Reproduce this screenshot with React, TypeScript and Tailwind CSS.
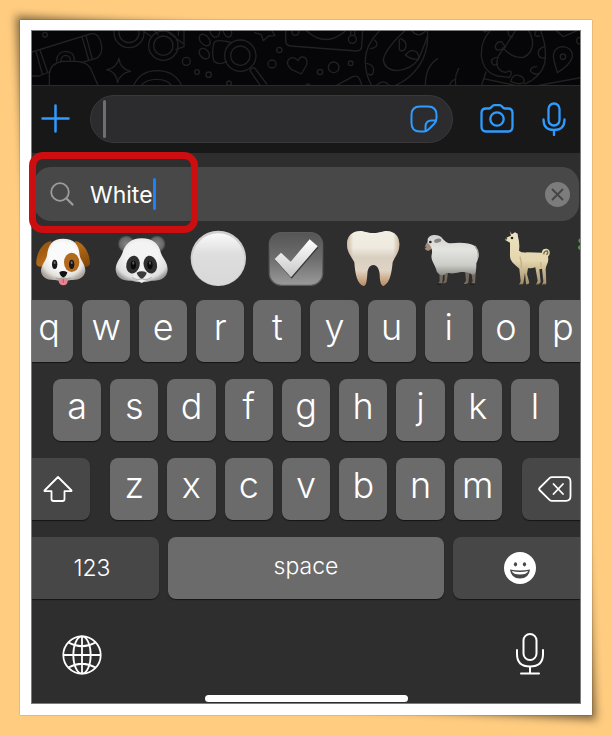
import { useState } from "react";
import type { ReactNode } from "react";

const Doodles = () => (
  <svg
    className="h-[54px] w-full"
    viewBox="0 0 1644 162"
    preserveAspectRatio="xMidYMid slice"
    fill="none"
    stroke="#222223"
    strokeWidth="4"
    strokeLinecap="round"
    strokeLinejoin="round"
    aria-hidden="true"
  >
    <g transform="translate(-96 -93)">
      <circle cx="135" cy="104" r="7" />
      <path d="M90 158L270 102Q294 96 303 128Q312 165 286 176L244 188M90 228H116L148 216" />
      <path d="M108 155L127 222M120 151L143 217M246 110L266 180M258 107L277 178" />
      <path d="M170 184Q170 154 198 154Q224 156 223 182M182 184Q184 166 198 166Q212 168 211 182" />
      <path d="M148 258V222Q150 190 188 184H230Q262 186 272 206L295 258" />
      <path d="M357 175Q359 206 392 214Q360 218 353 248Q350 216 320 209Q350 204 357 175Z" />
      <circle cx="387" cy="98" r="45" />
      <circle cx="387" cy="98" r="30" />
      <path d="M434 96L452 108M464 93L474 104M535 93V106M552 93V140L528 148M500 93L548 130" />
      <circle cx="490" cy="137" r="44" />
      <circle cx="490" cy="137" r="29" />
      <path d="M400 258Q420 212 472 212Q524 212 546 258M422 258Q438 238 470 238Q502 238 516 258" />
      <circle cx="559" cy="184" r="12" />
      <circle cx="591" cy="216" r="7" />
      <circle cx="626" cy="224" r="8" />
      <circle cx="687" cy="250" r="7" />
      <ellipse cx="614" cy="120" rx="13" ry="20" transform="rotate(-42 614 120)" />
      <ellipse cx="613" cy="161" rx="13" ry="18" transform="rotate(-42 613 161)" />
      <ellipse cx="644" cy="93" rx="14" ry="19" transform="rotate(-20 644 93)" />
      <ellipse cx="682" cy="93" rx="12" ry="19" transform="rotate(-20 682 93)" />
      <circle cx="721" cy="167" r="47" />
      <circle cx="721" cy="167" r="29" />
      <path d="M695 128Q650 116 642 128Q634 160 642 184Q658 198 680 184" />
      <path d="M750 212Q752 202 764 204L800 252M750 212L782 258" />
      <path d="M764 98L784 104L790 122L806 108L825 107L816 93" />
      <circle cx="838" cy="150" r="8" />
      <circle cx="816" cy="192" r="12" />
      <circle cx="886" cy="96" r="10" />
      <path d="M904 222L874 208Q856 192 866 178Q880 166 894 182Q900 168 914 172Q926 184 918 198Z" />
      <path d="M857 93V124Q858 136 872 138L1070 153Q1084 152 1085 140L1088 93M920 93Q978 144 1036 93" />
    </g>
    <g transform="translate(810 -93)">
      <path d="M146 93V106M158 93V106" />
      <circle cx="151" cy="118" r="12" />
      <circle cx="95" cy="202" r="16" />
      <circle cx="54" cy="216" r="8" />
      <circle cx="146" cy="190" r="7" />
      <path d="M10 258Q18 246 26 258M100 258L152 230Q168 224 174 240L180 258" />
      <path d="M232 93Q186 140 190 190Q192 230 210 258M376 93Q382 150 352 196Q322 240 276 258" />
      <path d="M308 93Q252 144 244 178Q246 208 284 212Q330 208 350 176Q370 130 376 110" />
      <path d="M218 120Q236 140 206 146M194 190Q222 196 212 222Q206 228 200 222M226 254Q244 236 262 256M296 116Q318 126 310 146Q298 158 292 148V118M310 166Q326 144 344 156Q354 168 348 180M310 164Q324 178 346 178M330 93Q350 116 370 93" />
      <path d="M407 176Q370 198 370 258M470 205Q456 230 462 258M442 258Q448 240 460 238" />
      <path d="M564 93Q536 122 538 168Q544 216 586 228L622 232Q634 216 622 212Q606 224 590 206Q574 180 604 148L640 93" />
      <path d="M604 146Q580 158 580 138Q586 122 600 126L610 142M584 172Q564 176 570 190Q576 200 586 192M602 142Q630 176 664 172Q692 160 692 128Q690 106 680 93M618 93Q618 112 632 110" />
      <path d="M716 93Q736 142 728 190Q716 232 668 252M712 108Q692 112 702 93M726 140Q704 148 710 166Q714 176 728 174M712 220Q696 226 686 214Q682 202 704 200M626 244Q632 222 650 226Q670 232 666 248Q648 256 626 244" />
      <path d="M538 258L552 216M544 236L640 256M700 258L840 232" />
      <path d="M766 218L755 178Q750 142 784 140Q816 146 810 174Q802 196 766 218Z" />
      <circle cx="783" cy="170" r="8" />
      <circle cx="834" cy="122" r="10" />
      <path d="M764 93L784 110L824 93M544 93L550 96L556 93" />
    </g>
  </svg>
);

const Dog = () => (
  <>
    <defs>
      <radialGradient id="dogHead" cx=".5" cy=".4" r=".62">
        <stop offset=".5" stopColor="#fafafa" />
        <stop offset=".8" stopColor="#e6e3df" />
        <stop offset="1" stopColor="#aaa49c" />
      </radialGradient>
      <linearGradient id="dogEar" x1="0" y1="0" x2="1" y2="1">
        <stop offset="0" stopColor="#8e500e" />
        <stop offset=".5" stopColor="#b56a17" />
        <stop offset="1" stopColor="#7d430a" />
      </linearGradient>
    </defs>
    <path d="M50 34C26 32 2 70 4 102C8 114 26 112 34 98ZM119 34C142 32 166 70 165 102C160 114 144 112 134 98Z" fill="url(#dogEar)" />
    <path d="M84 26C116 26 132 42 134 76C136 90 152 104 151 124C148 142 130 152 108 150Q84 156 60 150C38 152 20 142 18 124C18 104 34 92 36 76C40 42 54 26 84 26Z" fill="url(#dogHead)" />
    <ellipse cx="110" cy="97" rx="23" ry="29" fill="#b16a1c" />
    <ellipse cx="59" cy="103" rx="8" ry="14" fill="#18181a" />
    <ellipse cx="110" cy="103" rx="8" ry="14" fill="#18181a" />
    <ellipse cx="59" cy="98" rx="3" ry="4" fill="#6f6f70" />
    <ellipse cx="110" cy="98" rx="3" ry="4" fill="#6f6f70" />
    <path d="M71 145H98V154Q97 166 85 166Q73 166 71 154Z" fill="#e8838f" />
    <path d="M85 147V159" stroke="#c95569" strokeWidth="3" />
    <path d="M62 144Q76 150 84 142Q94 150 108 144" fill="none" stroke="#a9a59f" strokeWidth="4" />
    <path d="M73 127Q84 119 97 127Q94 140 85 142Q76 140 73 127Z" fill="#111" />
  </>
);

const Panda = () => (
  <>
    <defs>
      <radialGradient id="pandaHead" cx=".5" cy=".4" r=".62">
        <stop offset=".5" stopColor="#f3f3f3" />
        <stop offset=".85" stopColor="#dedede" />
        <stop offset="1" stopColor="#9b9b9b" />
      </radialGradient>
      <radialGradient id="pandaEar">
        <stop offset="0" stopColor="#858585" />
        <stop offset=".75" stopColor="#696969" />
        <stop offset="1" stopColor="#3b4141" />
      </radialGradient>
    </defs>
    <circle cx="40" cy="42" r="25" fill="url(#pandaEar)" />
    <circle cx="132" cy="42" r="25" fill="url(#pandaEar)" />
    <path d="M86 25C120 25 138 42 144 70C150 86 164 96 164 120C162 144 142 154 116 152Q86 162 56 152C30 154 10 144 8 120C8 96 22 86 28 70C36 42 54 25 86 25Z" fill="url(#pandaHead)" />
    <ellipse cx="60" cy="104" rx="20" ry="27" fill="#2f2f2f" transform="rotate(12 60 104)" />
    <ellipse cx="112" cy="104" rx="20" ry="27" fill="#2f2f2f" transform="rotate(-12 112 104)" />
    <ellipse cx="61" cy="105" rx="8" ry="13" fill="#0a0a0a" />
    <ellipse cx="111" cy="105" rx="8" ry="13" fill="#0a0a0a" />
    <ellipse cx="61" cy="99" rx="3" ry="5" fill="#5c5c5c" />
    <ellipse cx="111" cy="99" rx="3" ry="5" fill="#5c5c5c" />
    <path d="M57 143Q68 124 86 124Q104 124 116 143Q104 146 86 159Q68 146 57 143Z" fill="#ededed" />
    <path d="M57 142Q72 154 86 145Q100 154 116 142" fill="none" stroke="#b8b8b8" strokeWidth="4" />
    <path d="M71 128Q86 120 101 128Q98 140 86 146Q74 140 71 128Z" fill="#3c3a3a" />
  </>
);

const WhiteCircle = () => (
  <>
    <defs>
      <linearGradient id="disc" x1="0" y1="0" x2="0" y2="1">
        <stop offset="0" stopColor="#fafafa" />
        <stop offset=".4" stopColor="#dedede" />
        <stop offset="1" stopColor="#d8d8d8" />
      </linearGradient>
    </defs>
    <circle cx="85" cy="85" r="83" fill="#cfcfcf" />
    <circle cx="85" cy="88" r="78" fill="url(#disc)" />
  </>
);

const CheckBox = () => (
  <>
    <defs>
      <linearGradient id="box" x1="0" y1="0" x2="0" y2="1">
        <stop offset="0" stopColor="#555" />
        <stop offset=".5" stopColor="#6e6e6e" />
        <stop offset="1" stopColor="#9a9a9a" />
      </linearGradient>
      <linearGradient id="tick" x1="0" y1="0" x2="0" y2="1">
        <stop offset="0" stopColor="#fff" />
        <stop offset="1" stopColor="#c6c6c6" />
      </linearGradient>
    </defs>
    <rect x="4" y="8" width="160" height="158" rx="36" fill="url(#box)" stroke="#5c5c5c" strokeWidth="4" />
    <path d="M22 91L41 72L70 99L127 32L151 53L71 146Z" fill="#3d3d3d" />
    <path d="M20 87L39 68L68 95L125 28L149 49L69 142Z" fill="url(#tick)" />
  </>
);

const Tooth = () => (
  <>
    <defs>
      <linearGradient id="tooth" x1="0" y1="0" x2="0" y2="1">
        <stop offset="0" stopColor="#f3efe3" />
        <stop offset=".3" stopColor="#eeeadf" />
        <stop offset=".48" stopColor="#d9cfc1" />
        <stop offset=".72" stopColor="#e0d4c4" />
        <stop offset="1" stopColor="#b98a61" />
      </linearGradient>
      <linearGradient id="toothSides">
        <stop offset="0" stopColor="#a98564" stopOpacity=".5" />
        <stop offset=".12" stopColor="#a98564" stopOpacity="0" />
        <stop offset=".88" stopColor="#a98564" stopOpacity="0" />
        <stop offset="1" stopColor="#a98564" stopOpacity=".5" />
      </linearGradient>
    </defs>
    {["url(#tooth)", "url(#toothSides)"].map((fill) => (
      <path
        key={fill}
        d="M45 3C58 3 66 9 85 9C104 9 112 3 126 3C150 4 163 20 163 43C163 70 149 80 143 97C140 126 136 158 116 168C106 168 104 146 104 132C102 116 96 105 85 105C74 105 68 116 67 132C66 146 65 168 56 168C36 164 30 128 28 97C20 80 6 68 6 43C6 20 20 3 45 3Z"
        fill={fill}
      />
    ))}
  </>
);

const Sheep = () => (
  <>
    <defs>
      <linearGradient id="wool" x1="0" y1="0" x2="0" y2="1">
        <stop offset="0" stopColor="#cfd0ce" />
        <stop offset=".35" stopColor="#e4e4e1" />
        <stop offset=".75" stopColor="#cccdc8" />
        <stop offset="1" stopColor="#8b8c86" />
      </linearGradient>
    </defs>
    <path d="M49 122H61L58 160L52 163H44L50 154ZM64 122H76L71 156L65 160H60L65 150ZM126 122H140L136 158L130 162H122L129 152ZM144 122H159L156 160L150 164H142L149 154Z" fill="#75685e" />
    <path d="M43 160H55V165H43ZM141 160H154V165H141Z" fill="#22201f" />
    <path d="M16 32Q8 40 5 54Q8 64 17 62L30 54V30Z" fill="#a08c7b" />
    <path d="M14 28C18 12 50 10 60 28C68 34 70 40 84 40C110 36 140 38 156 48C170 64 168 84 160 100C160 124 158 136 148 134C136 128 126 124 110 127C92 132 78 130 70 129C60 140 46 136 41 124C38 106 22 92 26 74C30 58 24 46 14 38Z" fill="url(#wool)" />
    <ellipse cx="44" cy="32" rx="11" ry="6" fill="#8a857b" transform="rotate(-15 44 32)" />
    <circle cx="22" cy="36" r="4" fill="#25201c" />
    <path d="M5 54L10 51" stroke="#4a3a32" strokeWidth="3" />
    <path d="M156 48Q170 66 164 84" fill="none" stroke="#a8aaa5" strokeWidth="4" />
  </>
);

const Llama = () => (
  <>
    <defs>
      <linearGradient id="llama" x1="0" y1="0" x2="0" y2="1">
        <stop offset="0" stopColor="#ece2c3" />
        <stop offset=".55" stopColor="#e4d6ad" />
        <stop offset="1" stopColor="#9f8d67" />
      </linearGradient>
    </defs>
    <path d="M29 3L37 12L45 7L53 11L54 20Q60 40 57 62Q66 70 82 67L126 68C124 56 142 52 148 62Q152 72 144 80C148 98 138 104 137 118L139 160L135 165H126L130 154L126 116L118 118L122 156L116 164H108L113 152L106 112Q92 116 84 114L81 132L88 158L84 163H78L75 128L70 160L65 165H57L62 154L58 116C42 102 28 94 30 72V38L17 31Q14 26 22 22L33 17Z" fill="url(#llama)" />
    <path d="M131 73Q132 62 142 63Q146 70 139 74" fill="none" stroke="#75694e" strokeWidth="4" />
    <path d="M60 80Q66 100 64 114M122 96L124 112" fill="none" stroke="#c3b283" strokeWidth="4" />
    <circle cx="36" cy="24" r="4" fill="#2a241b" />
    <path d="M17 25L21 28M31 3L36 11" stroke="#3d3428" strokeWidth="4" />
    <path d="M57 161H66V165H57ZM109 161H117V165H109ZM127 161H137V165H127Z" fill="#554b3b" />
  </>
);

const Herb = () => (
  <path d="M24 20Q2 22 1 32Q2 40 14 42Q-2 46 0 54Q4 64 24 60Q60 80 90 50Q60 20 24 20Z" fill="#4f9a3a" />
);

const emojis: { label: string; art: ReactNode }[] = [
  { label: "Dog face", art: <Dog /> },
  { label: "Panda", art: <Panda /> },
  { label: "White circle", art: <WhiteCircle /> },
  { label: "Check mark", art: <CheckBox /> },
  { label: "Tooth", art: <Tooth /> },
  { label: "Sheep", art: <Sheep /> },
  { label: "Llama", art: <Llama /> },
  { label: "Herb", art: <Herb /> },
];

const Key = ({ letter }: { letter: string }) => (
  <button className="flex h-[62px] min-w-0 flex-1 items-center justify-center rounded-lg bg-[#6b6b6b] pb-2 text-4xl font-light shadow-[0_1px_1px_#151515]">
    {letter}
  </button>
);

const darkKey =
  "flex h-[62px] shrink-0 items-center justify-center rounded-lg bg-[#474747] shadow-[0_1px_1px_#151515]";

const Toolbar = () => (
  <div className="flex h-[68px] items-center border-t border-[#2a2a2b] bg-[#181818] pr-3.5 pb-0.5 pl-[9px] text-[#2f9bff]">
    <button aria-label="Attach">
      <svg className="size-[29px]" viewBox="0 0 29 29" stroke="currentColor" strokeWidth="2.5" strokeLinecap="round">
        <path d="M14.5 1.5V27.5M1.5 14.5H27.5" />
      </svg>
    </button>

    <div className="ml-5 flex h-12 min-w-0 flex-1 items-center rounded-full border border-[#39393b] bg-[#2c2c2e] pr-3.5 pl-3">
      <span className="h-[38px] w-[3px] rounded-full bg-[#6f6f70]" />
      <input aria-label="Message" className="min-w-0 flex-1 bg-transparent px-2 text-2xl text-white outline-none" />
      <button aria-label="Stickers">
        <svg className="size-7" viewBox="0 0 28 28" fill="none" stroke="currentColor" strokeWidth="2" strokeLinejoin="round">
          <path d="M14 26.5H10Q1.5 26.5 1.5 18V10Q1.5 1.5 10 1.5H18Q26.5 1.5 26.5 10V13Q26.5 16.5 24 19L19 24Q16.5 26.5 14 26.5M15.5 26V22Q15.5 15.5 21.5 15.5H26" />
        </svg>
      </button>
    </div>

    <button aria-label="Camera" className="ml-[27px]">
      <svg className="h-[29px] w-[34px]" viewBox="0 0 34 29" fill="none" stroke="currentColor" strokeWidth="2.3" strokeLinejoin="round">
        <path d="M6 4.5H9Q10.5 4.5 11.5 3L12 2.5Q13 1.2 14.5 1.2H19.5Q21 1.2 22 2.5L22.5 3Q23.5 4.5 25 4.5H28Q32.5 4.5 32.5 9V22.5Q32.5 27.5 28 27.5H6Q1.5 27.5 1.5 22.5V9Q1.5 4.5 6 4.5Z" />
        <circle cx="17" cy="15" r="6.7" />
      </svg>
    </button>

    <button aria-label="Voice message" className="ml-7">
      <svg className="h-[34px] w-6" viewBox="0 0 24 34" fill="none" stroke="currentColor" strokeWidth="2.3" strokeLinecap="round">
        <rect x="6.5" y="1.5" width="11" height="22" rx="5.5" />
        <path d="M1.5 17.5Q1.5 28 12 28T22.5 17.5M12 28V33" />
      </svg>
    </button>
  </div>
);

const SearchField = () => {
  const [query, setQuery] = useState("White");

  return (
    <div className="relative pt-3.5 pr-px pl-0.5">
      <div className="flex h-[54px] items-center rounded-[17px] bg-[#484848] pr-[9px] pl-4">
        <svg className="size-6" viewBox="0 0 24 24" fill="none" stroke="#9c9c9c" strokeWidth="1.8" strokeLinecap="round" aria-hidden="true">
          <circle cx="10" cy="10" r="8.8" />
          <path d="M16.5 16.5L22.5 22.5" strokeWidth="2.3" />
        </svg>
        <input
          aria-label="Search emoji"
          className="ml-4 field-sizing-content bg-transparent pt-0.5 text-[23px] text-white caret-transparent outline-none"
          value={query}
          onChange={(e) => setQuery(e.target.value)}
        />
        <span className="h-8 w-[3px] rounded-full bg-[#1a82ff]" />
        <button aria-label="Clear search" className="ml-auto" onClick={() => setQuery("")}>
          <svg className="size-[25px]" viewBox="0 0 25 25">
            <circle cx="12.5" cy="12.5" r="12.5" fill="#7c7c7c" />
            <path d="M7.5 7.5L17.5 17.5M17.5 7.5L7.5 17.5" stroke="#444" strokeWidth="1.8" strokeLinecap="round" />
          </svg>
        </button>
      </div>
      {/* highlight around the query */}
      <div className="pointer-events-none absolute -top-px -left-[3px] h-[81px] w-[169px] rounded-[14px] border-7 border-[#cc0e10]" />
    </div>
  );
};

const EmojiRow = () => (
  <div className="overflow-hidden pt-[9px]">
    <div className="-mr-[54px] flex justify-between pl-[3px]">
      {emojis.map(({ label, art }) => (
        <button key={label} aria-label={label} className="shrink-0">
          <svg className="size-14" viewBox="0 0 168 168">
            {art}
          </svg>
        </button>
      ))}
    </div>
  </div>
);

const Keyboard = () => (
  <div className="overflow-hidden pt-3.5">
    <div className="-mx-[7px] flex flex-col gap-[17px] pb-0.5">
      <div className="flex gap-[9px]">
        {[..."qwertyuiop"].map((l) => (
          <Key key={l} letter={l} />
        ))}
      </div>

      <div className="flex gap-[9px] px-7">
        {[..."asdfghjkl"].map((l) => (
          <Key key={l} letter={l} />
        ))}
      </div>

      <div className="flex gap-5">
        <button aria-label="Shift" className={`${darkKey} w-[65px]`}>
          <svg className="h-[26px] w-[30px]" viewBox="0 0 30 26" fill="none" stroke="currentColor" strokeWidth="1.8" strokeLinejoin="round">
            <path d="M15 1L28.5 14.5Q28.8 15.2 28 15.2H21.5V23Q21.5 25 19.5 25H10.5Q8.5 25 8.5 23V15.2H2Q1.2 15.2 1.5 14.5Z" />
          </svg>
        </button>
        <div className="flex min-w-0 flex-1 gap-[9px]">
          {[..."zxcvbnm"].map((l) => (
            <Key key={l} letter={l} />
          ))}
        </div>
        <button aria-label="Delete" className={`${darkKey} w-[65px]`}>
          <svg className="h-[26px] w-[34px]" viewBox="0 0 34 26" fill="none" stroke="currentColor" strokeWidth="1.8" strokeLinecap="round" strokeLinejoin="round">
            <path d="M14 1.2H28Q32.5 1.2 32.5 5.7V20.3Q32.5 24.8 28 24.8H14Q12.5 24.8 11.5 23.8L1.5 14Q.7 13 1.5 12L11.5 2.2Q12.5 1.2 14 1.2Z" />
            <path d="M15.5 8L25 18M25 8L15.5 18" />
          </svg>
        </button>
      </div>

      <div className="flex gap-[9px]">
        <button className={`${darkKey} w-[134px] text-[23px] font-light`}>123</button>
        <button className="h-[62px] flex-1 rounded-lg bg-[#6b6b6b] pb-1 text-[23px] font-light shadow-[0_1px_1px_#151515]">
          space
        </button>
        <button aria-label="Emoji" className={`${darkKey} w-[134px]`}>
          <svg className="size-8" viewBox="0 0 32 32">
            <circle cx="16" cy="16" r="16" fill="#fff" />
            <ellipse cx="11.5" cy="12.3" rx="1.6" ry="2.1" fill="#474747" />
            <ellipse cx="20.5" cy="12.3" rx="1.6" ry="2.1" fill="#474747" />
            <path d="M6 17.5Q16 19.5 26 17.5Q25 26.5 16 26.5T6 17.5Z" fill="#474747" />
            <path d="M7.8 19Q16 20.8 24.2 19Q23 22.5 16 22.5T7.8 19Z" fill="#fff" />
          </svg>
        </button>
      </div>
    </div>

    <div className="flex items-end justify-between pt-8 pr-[35px] pl-[30px]">
      <button aria-label="Next keyboard">
        <svg className="size-10" viewBox="0 0 40 40" fill="none" stroke="currentColor" strokeWidth="1.8">
          <circle cx="20" cy="20" r="18.7" />
          <ellipse cx="20" cy="20" rx="8.7" ry="18.7" />
          <path d="M20 1.3V38.7M1.3 20H38.7M6.5 7.5Q20 15 33.5 7.5M6.5 32.5Q20 25 33.5 32.5" />
        </svg>
      </button>
      <button aria-label="Dictation">
        <svg className="h-[42px] w-[30px]" viewBox="0 0 30 42" fill="none" stroke="currentColor" strokeWidth="2" strokeLinecap="round">
          <rect x="8.5" y="1" width="13" height="26" rx="6.5" />
          <path d="M2 17V21Q2 33.5 15 33.5T28 21V17M15 33.5V40.5M6 40.5H24" />
        </svg>
      </button>
    </div>

    <div className="mx-auto mt-5 mb-px h-[7px] w-[203px] rounded-full bg-white" />
  </div>
);

export default function App() {
  return (
    <div className="min-h-screen bg-[#ffcc80] p-5 font-['Inter','Liberation_Sans',sans-serif] text-white">
      <div className="relative isolate">
        {/* lifted paper corners */}
        <div className="absolute -top-1 -left-1 -z-10 h-1/2 w-1/2 origin-top-left skew-3 bg-black/50 blur-[4px]" />
        <div className="absolute -right-1 -bottom-1 -z-10 h-1/2 w-1/2 origin-bottom-right skew-3 bg-black/50 blur-[4px]" />

        <main className="bg-white px-[11px] pt-2.5 pb-[11px] shadow-[0_0_1px_rgba(0,0,0,0.5)]">
          <div className="border border-[#7d7d7d] bg-[#2e2e2e]">
            <div className="bg-[#060608]">
              <Doodles />
            </div>
            <Toolbar />
            <SearchField />
            <EmojiRow />
            <Keyboard />
          </div>
        </main>
      </div>
    </div>
  );
}
